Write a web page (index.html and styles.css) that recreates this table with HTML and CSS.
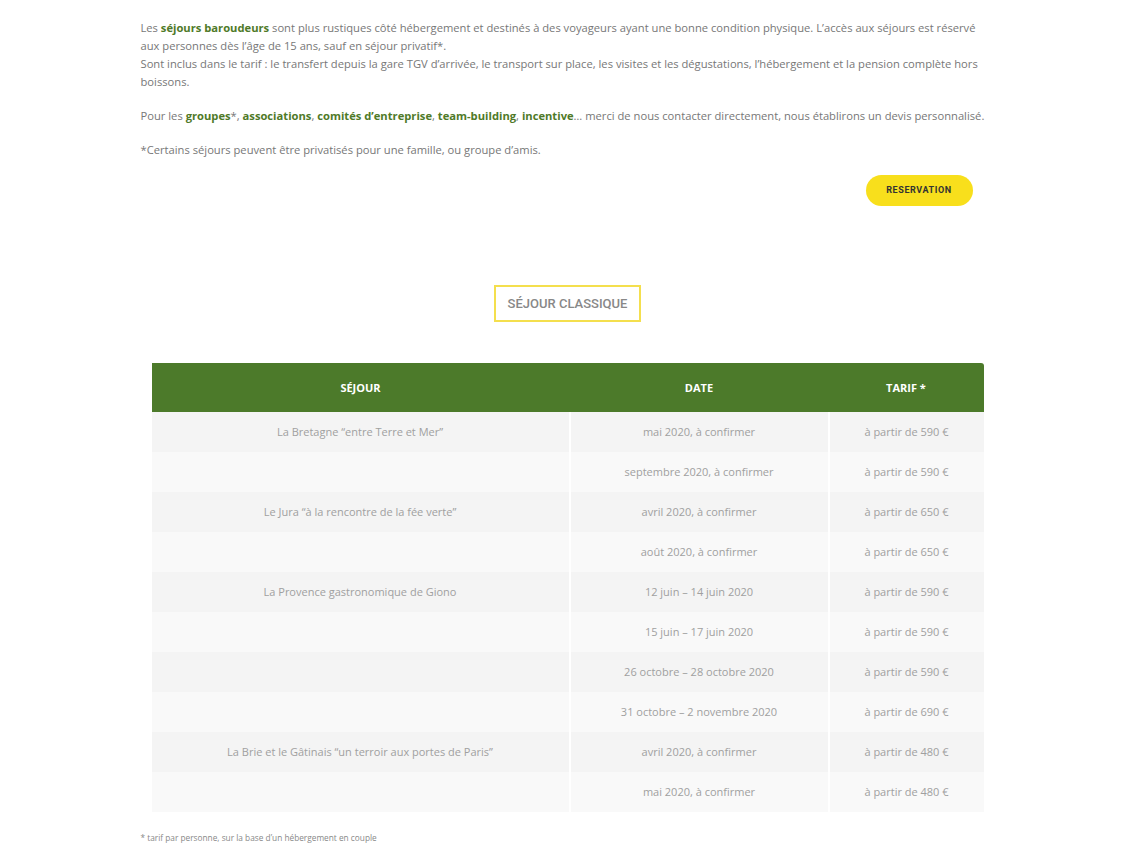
FILE: index.html
```html
<!DOCTYPE html>
<html lang="fr">
<head>
    <meta charset="UTF-8">
    <meta name="viewport" content="width=device-width, initial-scale=1.0">
    <title>Séjours</title>
    <link rel="stylesheet" href="styles.css">
</head>
<body>
    <div class="container">
        <p>Les <strong>séjours baroudeurs</strong> sont plus rustiques côté hébergement et destinés à des voyageurs ayant une bonne condition physique. L’accès aux séjours est réservé aux personnes dès l’âge de 15 ans, sauf en séjour privatif*.<br>
        Sont inclus dans le tarif : le transfert depuis la gare TGV d’arrivée, le transport sur place, les visites et les dégustations, l’hébergement et la pension complète hors boissons.</p>

        <p>Pour les <strong>groupes</strong>*, <strong>associations</strong>, <strong>comités d’entreprise</strong>, <strong>team-building</strong>, <strong>incentive</strong>… merci de nous contacter directement, nous établirons un devis personnalisé.</p>

        <p>*Certains séjours peuvent être privatisés pour une famille, ou groupe d’amis.</p>

        <div class="actions">
            <a href="#" class="btn">RESERVATION</a>
        </div>

        <div class="section-title">
            <h2>SÉJOUR CLASSIQUE</h2>
        </div>

        <table class="tarifs">
            <thead>
                <tr>
                    <th class="col-sejour">SÉJOUR</th>
                    <th class="col-date">DATE</th>
                    <th class="col-tarif">TARIF *</th>
                </tr>
            </thead>
            <tbody>
                <tr><td>La Bretagne “entre Terre et Mer”</td><td>mai 2020, à confirmer</td><td>à partir de 590 €</td></tr>
                <tr><td></td><td>septembre 2020, à confirmer</td><td>à partir de 590 €</td></tr>
                <tr><td>Le Jura “à la rencontre de la fée verte”</td><td>avril 2020, à confirmer</td><td>à partir de 650 €</td></tr>
                <tr><td></td><td>août 2020, à confirmer</td><td>à partir de 650 €</td></tr>
                <tr><td>La Provence gastronomique de Giono</td><td>12 juin – 14 juin 2020</td><td>à partir de 590 €</td></tr>
                <tr><td></td><td>15 juin – 17 juin 2020</td><td>à partir de 590 €</td></tr>
                <tr><td></td><td>26 octobre – 28 octobre 2020</td><td>à partir de 590 €</td></tr>
                <tr><td></td><td>31 octobre – 2 novembre 2020</td><td>à partir de 690 €</td></tr>
                <tr><td>La Brie et le Gâtinais “un terroir aux portes de Paris”</td><td>avril 2020, à confirmer</td><td>à partir de 480 €</td></tr>
                <tr><td></td><td>mai 2020, à confirmer</td><td>à partir de 480 €</td></tr>
            </tbody>
        </table>

        <p class="note">* tarif par personne, sur la base d’un hébergement en couple</p>
    </div>
</body>
</html>
```

FILE: styles.css
```css
body {
    font-family: "Open Sans", Arial, sans-serif;
    font-size: 11.2px;
    line-height: 18px;
    color: #777;
    margin: 0;
    background: #fff;
}
.container {
    width: 852px;
    margin: 0 auto;
    padding-top: 19px;
}
p {
    margin: 0 0 16px;
}
strong {
    color: #4f7a28;
    font-weight: 700;
}
.actions {
    display: flex;
    justify-content: flex-end;
    padding-right: 20px;
}
.btn {
    display: inline-block;
    width: 107px;
    height: 31px;
    line-height: 31px;
    text-align: center;
    background: #f8df1c;
    color: #333;
    border-radius: 16px;
    font-family: Roboto, Arial, sans-serif;
    font-size: 9px;
    font-weight: 700;
    letter-spacing: 0.6px;
    text-decoration: none;
}
.section-title {
    display: flex;
    justify-content: center;
    margin: 79px 0 41px;
    padding-left: 2px;
}
.section-title h2 {
    margin: 0;
    width: 143px;
    height: 33px;
    line-height: 33px;
    text-align: center;
    border: 2px solid #f4df4e;
    color: #888;
    font-family: Roboto, Arial, sans-serif;
    font-size: 13px;
    font-weight: 500;
}
.tarifs {
    width: 832px;
    margin: 0 9px 0 11px;
    border-collapse: collapse;
    text-align: center;
}
.tarifs th {
    height: 49px;
    padding: 0;
    background: #4c7a2a;
    color: #fff;
    font-size: 11px;
    font-weight: 700;
}
.tarifs thead tr th:last-child {
    border-top-right-radius: 3px;
}
.col-sejour { width: 418px; }
.col-date { width: 259px; }
.tarifs td {
    height: 40px;
    padding: 0;
    color: #a0a0a0;
    font-size: 11px;
    border-left: 2px solid #fff;
}
.tarifs td:first-child {
    border-left: none;
}
.tarifs tbody tr:nth-child(odd) {
    background: #f4f4f4;
}
.tarifs tbody tr:nth-child(even) {
    background: #f9f9f9;
}
.note {
    margin: 17px 0 0;
    font-size: 8.3px;
    color: #888;
}
```
